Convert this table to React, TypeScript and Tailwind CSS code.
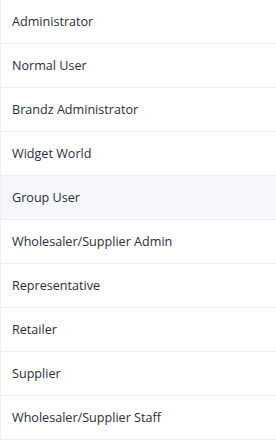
const roles = [
  'Administrator',
  'Normal User',
  'Brandz Administrator',
  'Widget World',
  'Group User',
  'Wholesaler/Supplier Admin',
  'Representative',
  'Retailer',
  'Supplier',
  'Wholesaler/Supplier Staff',
];

// Highlighted row (hovered)
const activeRole = 'Group User';

export default function App() {
  return (
    <div
      className="w-[276px] bg-white border-l border-[#eef0f3]"
      style={{ fontFamily: '"Open Sans", "Noto Sans", sans-serif' }}
    >
      <ul>
        {roles.map((role) => (
          <li
            key={role}
            className={`pl-[11px] pr-3 py-3 text-[12.6px] leading-[19px] text-[#2b2d3a] border-b border-[#eceef1] ${
              role === activeRole ? 'bg-[#f5f7fa]' : 'bg-white'
            }`}
          >
            {role}
          </li>
        ))}
      </ul>
    </div>
  );
}
